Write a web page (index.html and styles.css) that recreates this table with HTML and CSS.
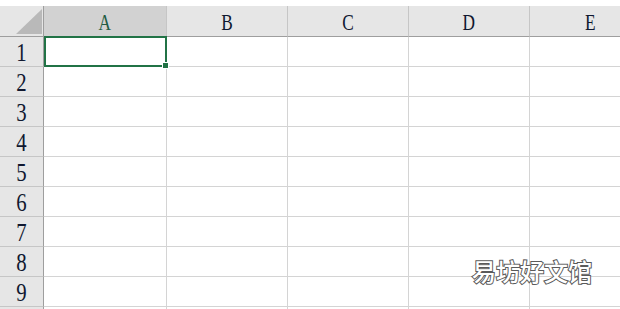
FILE: index.html
```html
<!DOCTYPE html>
<html lang="zh">
<head>
<meta charset="utf-8">
<link rel="stylesheet" href="styles.css">
</head>
<body>
<div class="sheet">
  <div class="corner"><span class="tri"></span></div>
  <div class="colhead sel"><span class="t">A</span></div>
  <div class="colhead"><span class="t">B</span></div>
  <div class="colhead"><span class="t">C</span></div>
  <div class="colhead"><span class="t">D</span></div>
  <div class="colhead"><span class="t">E</span></div>

  <div class="rowhead rsel"><span class="n">1</span></div>
  <div class="cell active"><span class="selbox"></span><span class="handle"></span></div><div class="cell"></div><div class="cell"></div><div class="cell"></div><div class="cell"></div>
  <div class="rowhead"><span class="n">2</span></div>
  <div class="cell"></div><div class="cell"></div><div class="cell"></div><div class="cell"></div><div class="cell"></div>
  <div class="rowhead"><span class="n">3</span></div>
  <div class="cell"></div><div class="cell"></div><div class="cell"></div><div class="cell"></div><div class="cell"></div>
  <div class="rowhead"><span class="n">4</span></div>
  <div class="cell"></div><div class="cell"></div><div class="cell"></div><div class="cell"></div><div class="cell"></div>
  <div class="rowhead"><span class="n">5</span></div>
  <div class="cell"></div><div class="cell"></div><div class="cell"></div><div class="cell"></div><div class="cell"></div>
  <div class="rowhead"><span class="n">6</span></div>
  <div class="cell"></div><div class="cell"></div><div class="cell"></div><div class="cell"></div><div class="cell"></div>
  <div class="rowhead"><span class="n">7</span></div>
  <div class="cell"></div><div class="cell"></div><div class="cell"></div><div class="cell"></div><div class="cell"></div>
  <div class="rowhead"><span class="n">8</span></div>
  <div class="cell"></div><div class="cell"></div><div class="cell"></div><div class="cell"></div><div class="cell"></div>
  <div class="rowhead"><span class="n">9</span></div>
  <div class="cell"></div><div class="cell"></div><div class="cell"></div><div class="cell"></div><div class="cell"></div>
  <div class="rowhead"></div>
  <div class="cell"></div><div class="cell"></div><div class="cell"></div><div class="cell"></div><div class="cell"></div>
</div>
<div class="watermark">易坊好文馆</div>
</body>
</html>
```
FILE: styles.css
```css
html, body {
  margin: 0;
  padding: 0;
  background: #ffffff;
  overflow: hidden;
  width: 620px;
  height: 309px;
}
body {
  position: relative;
  font-family: "Liberation Serif", "Times New Roman", serif;
}
.sheet {
  margin-top: 6px;
  width: 620px;
  height: 303px;
  overflow: hidden;
  display: grid;
  grid-template-columns: 44px 123px 121px 121px 121px 121px;
  grid-template-rows: 31px;
  grid-auto-rows: 30px;
}
.corner {
  background: #e6e6e6;
  border-right: 1px solid #9e9e9e;
  border-bottom: 1px solid #9e9e9e;
  position: relative;
}
.tri {
  position: absolute;
  right: 1px;
  bottom: 2px;
  width: 0;
  height: 0;
  border-left: 26px solid transparent;
  border-bottom: 25px solid #b9b9b9;
}
.colhead {
  background: #e6e6e6;
  border-right: 1px solid #c6c6c6;
  border-bottom: 1px solid #9e9e9e;
  display: flex;
  align-items: center;
  justify-content: center;
  color: #101830;
}
.colhead.sel {
  background: #d2d2d2;
  color: #245c44;
}
.t {
  font-size: 24px;
  line-height: 1;
  display: inline-block;
  transform: scaleX(0.72);
  margin-top: 2px;
}
.rowhead {
  background: #e6e6e6;
  border-right: 1px solid #9e9e9e;
  border-bottom: 1px solid #c6c6c6;
  display: flex;
  align-items: center;
  justify-content: center;
  color: #101830;
}
.n {
  font-size: 26px;
  line-height: 1;
  display: inline-block;
  transform: scaleX(0.8);
  margin-top: 2px;
}
.cell {
  border-right: 1px solid #d4d4d4;
  border-bottom: 1px solid #d4d4d4;
  background: #ffffff;
}
.active {
  position: relative;
}
.selbox {
  position: absolute;
  left: 0;
  top: -1px;
  right: -1px;
  bottom: -1px;
  border: 2px solid #217346;
}
.handle {
  position: absolute;
  right: -3px;
  bottom: -3px;
  width: 5px;
  height: 5px;
  background: #217346;
  border: 1px solid #ffffff;
  box-sizing: content-box;
}
.watermark {
  position: absolute;
  left: 472px;
  top: 259px;
  font-family: "Noto Sans CJK SC", sans-serif;
  font-weight: 500;
  font-size: 24px;
  line-height: 1;
  color: #ffffff;
  -webkit-text-stroke: 2px #5a5a5a;
  paint-order: stroke fill;
}
```
